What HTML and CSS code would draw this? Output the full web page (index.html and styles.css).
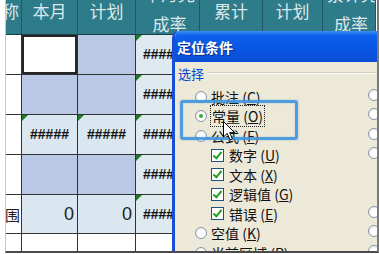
FILE: index.html
```html
<!DOCTYPE html>
<html lang="zh-CN">
<head>
    <meta charset="UTF-8">
    <title>定位条件</title>
    <link rel="stylesheet" href="styles.css">
</head>
<body>

<div class="frame">
    <div class="sheet">
        <div class="hd hd-first">名称</div>
        <div class="hd">本月</div>
        <div class="hd">计划</div>
        <div class="hd"><span class="two">本月完<br>成率</span></div>
        <div class="hd">累计</div>
        <div class="hd">计划</div>
        <div class="hd"><span class="two">累计完<br>成率</span></div>

        <div class="c"></div>
        <div class="c sel"></div>
        <div class="c mid"></div>
        <div class="c pale err hash">#######</div>
        <div class="c pale"></div>
        <div class="c pale"></div>
        <div class="c pale"></div>

        <div class="c"></div>
        <div class="c mid"></div>
        <div class="c mid"></div>
        <div class="c pale err hash">#######</div>
        <div class="c pale"></div>
        <div class="c pale"></div>
        <div class="c pale"></div>

        <div class="c"></div>
        <div class="c lite err hash ctr">#####</div>
        <div class="c lite err hash ctr">#####</div>
        <div class="c pale err hash">#######</div>
        <div class="c pale"></div>
        <div class="c pale"></div>
        <div class="c pale"></div>

        <div class="c"></div>
        <div class="c mid"></div>
        <div class="c mid"></div>
        <div class="c pale err hash">#######</div>
        <div class="c pale"></div>
        <div class="c pale"></div>
        <div class="c pale"></div>

        <div class="c name">范围</div>
        <div class="c lite num">0</div>
        <div class="c lite num">0</div>
        <div class="c pale err hash">#######</div>
        <div class="c pale"></div>
        <div class="c pale"></div>
        <div class="c pale"></div>

        <div class="c last"></div>
        <div class="c last"></div>
        <div class="c last"></div>
        <div class="c last"></div>
        <div class="c last"></div>
        <div class="c last"></div>
        <div class="c last"></div>
    </div>

    <!-- Go To Special dialog over the sheet -->
    <div class="dialog">
        <div class="dlg-title">定位条件</div>
        <div class="dlg-body">
            <div class="group-label">选择</div>
            <div class="opts">
                <div class="col-left">
                    <div class="opt"><span class="radio"></span>批注 (<u>C</u>)</div>
                    <div class="opt"><span class="radio on"></span><span class="focus">常量 (<u>O</u>)</span></div>
                    <div class="opt"><span class="radio"></span>公式 (<u>F</u>)</div>
                    <div class="opt sub"><span class="check"></span>数字 (<u>U</u>)</div>
                    <div class="opt sub"><span class="check"></span>文本 (<u>X</u>)</div>
                    <div class="opt sub"><span class="check"></span>逻辑值 (<u>G</u>)</div>
                    <div class="opt sub"><span class="check"></span>错误 (<u>E</u>)</div>
                    <div class="opt"><span class="radio"></span>空值 (<u>K</u>)</div>
                    <div class="opt"><span class="radio"></span>当前区域 (<u>R</u>)</div>
                </div>
                <div class="col-right">
                    <div class="opt"><span class="radio"></span>行内容差异单元格 (<u>W</u>)</div>
                    <div class="opt"><span class="radio"></span>列内容差异单元格 (<u>M</u>)</div>
                    <div class="opt"><span class="radio"></span>引用单元格 (<u>P</u>)</div>
                    <div class="opt"><span class="radio"></span>从属单元格 (<u>D</u>)</div>
                    <div class="opt sub"><span class="radio"></span>直属 (<u>I</u>)</div>
                    <div class="opt sub"><span class="radio"></span>所有级别 (<u>L</u>)</div>
                    <div class="opt"><span class="radio"></span>最后一个单元格 (<u>S</u>)</div>
                    <div class="opt"><span class="radio"></span>可见单元格 (<u>Y</u>)</div>
                    <div class="opt"><span class="radio"></span>条件格式 (<u>T</u>)</div>
                </div>
            </div>
        </div>

        <div class="mark"></div>
        <svg class="pointer" width="13" height="21" viewBox="0 0 13 21">
            <path d="M0.5 0.5 L0.5 16 L4.2 12.4 L7 18.8 L9.4 17.8 L6.7 11.6 L11.6 11.6 Z" fill="#fff" stroke="#000" stroke-width="1" stroke-linejoin="round"/>
        </svg>
    </div>
</div>

</body>
</html>
```

FILE: styles.css
```css
body {
    margin: 0;
    padding: 0;
    background: #fff;
    font-family: "Noto Sans CJK SC", "Liberation Sans", sans-serif;
}

.frame {
    position: relative;
    margin-left: 5px;
    width: 371px;
    height: 251px;
    overflow: hidden;
    border-left: 1px solid #c8c8c8;
    border-right: 2px solid #7a7a7a;
    border-bottom: 2px solid #4a4a4a;
}

/* spreadsheet */
.sheet {
    display: grid;
    grid-template-columns: 16px 56px 58px 64px 63px 60px 53px;
    grid-template-rows: 35px 40px 40px 40px 40px 39px 20px;
}

.hd,
.c {
    box-sizing: border-box;
    border-right: 1px solid #333;
    border-bottom: 1px solid #333;
    overflow: hidden;
    white-space: nowrap;
    position: relative;
}

.hd {
    background: #2e7b89;
    border-right-color: #1d5864;
    border-bottom-color: #1f3f46;
    color: #dce8eb;
    font-size: 17px;
    line-height: 22px;
    text-align: center;
}

.hd-first {
    display: flex;
    justify-content: flex-end;
    padding-right: 2px;
}

.hd .two {
    display: block;
    margin-top: -21px;
    line-height: 30px;
    padding-left: 4px;
}

.c {
    background: #fff;
}

.mid {
    background: #b9c9e5;
}

.lite {
    background: #dae6f0;
}

.pale {
    background: #dfe9f0;
}

.last {
    background: #fff;
    border-bottom: none;
}

.sel {
    box-shadow: inset 0 0 0 2px #262626;
}

.err::before {
    content: "";
    position: absolute;
    left: 0;
    top: 0;
    border-top: 6px solid #1f7a22;
    border-right: 6px solid transparent;
}

.hash {
    font-family: "Liberation Sans", sans-serif;
    font-size: 14px;
    font-weight: bold;
    line-height: 39px;
    padding-left: 7px;
    color: #111;
}

.hash.ctr {
    padding-left: 0;
    text-align: center;
}

.num {
    font-family: "Liberation Sans", sans-serif;
    font-size: 18px;
    line-height: 38px;
    text-align: right;
    padding-right: 3px;
    color: #222;
}

.name {
    display: flex;
    justify-content: flex-end;
    align-items: center;
    font-size: 15px;
    padding-right: 1px;
    color: #222;
}

/* dialog */
.dialog {
    position: absolute;
    left: 166px;
    top: 31px;
    width: 240px;
    height: 240px;
    background: #ece9d8;
    border-left: 3px solid #1650d8;
    border-top-left-radius: 7px;
    overflow: hidden;
}

.dlg-title {
    height: 31px;
    display: flex;
    align-items: center;
    padding-left: 2px;
    background: linear-gradient(#3d8ff6 0, #0c62ec 14%, #0856e4 55%, #0a4dd6 100%);
    color: #fff;
    font-size: 14px;
    font-weight: bold;
    text-shadow: 1px 1px 0 #0a2f8f;
}

.dlg-body {
    padding: 3px 0 0 3px;
}

.group-label {
    display: flex;
    align-items: center;
    height: 16px;
    color: #0046d5;
    font-size: 13px;
}

.group-label::after {
    content: "";
    flex: 1;
    margin-left: 4px;
    border-top: 1px solid #d0d0bf;
    border-bottom: 1px solid #fff;
}

.opts {
    display: flex;
    margin-top: 6px;
}

.col-left {
    width: 190px;
    flex: none;
    padding-left: 17px;
    box-sizing: border-box;
}

.col-right {
    margin-top: -2px;
}

.opt {
    display: flex;
    align-items: center;
    height: 19.5px;
    font-size: 14px;
    color: #111;
    white-space: nowrap;
}

.col-left .sub {
    padding-left: 16px;
}

.col-right .sub {
    padding-left: 18px;
}

.opt u {
    text-underline-offset: 1px;
}

.radio {
    flex: none;
    position: relative;
    width: 12px;
    height: 12px;
    margin-right: 4px;
    box-sizing: border-box;
    border: 1px solid #8797ad;
    border-radius: 50%;
    background: radial-gradient(circle at 60% 60%, #fff 40%, #e2e2dc 100%);
}

.radio.on::after {
    content: "";
    position: absolute;
    left: 3px;
    top: 3px;
    width: 4px;
    height: 4px;
    border-radius: 50%;
    background: #3ea83a;
}

.check {
    flex: none;
    position: relative;
    width: 13px;
    height: 13px;
    margin-right: 5px;
    box-sizing: border-box;
    border: 1px solid #1c5180;
    background: #fff;
}

.check::after {
    content: "";
    position: absolute;
    left: 3px;
    top: 0;
    width: 3px;
    height: 7px;
    border: solid #21a121;
    border-width: 0 2px 2px 0;
    transform: rotate(40deg);
}

.focus {
    outline: 1px dotted #222;
    padding: 0 1px;
}

.mark {
    position: absolute;
    left: 5px;
    top: 69px;
    width: 118px;
    height: 40px;
    box-sizing: border-box;
    border: 3px solid rgba(62, 148, 222, 0.9);
    border-radius: 3px;
    box-shadow: 0 0 2px rgba(62, 148, 222, 0.5), inset 0 0 2px rgba(62, 148, 222, 0.4);
}

.pointer {
    position: absolute;
    left: 48px;
    top: 90px;
}
```
